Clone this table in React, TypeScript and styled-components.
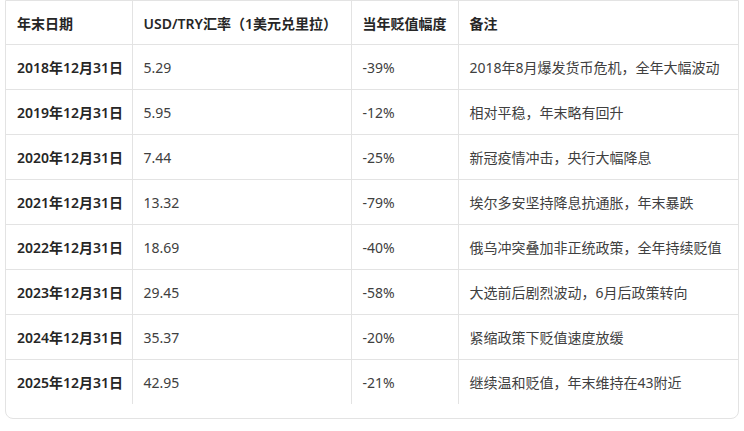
import React from "react";
import styled, { createGlobalStyle } from "styled-components";

interface IRow {
  date: string;
  rate: string;
  change: string;
  note: string;
}

const rows: IRow[] = [
  { date: "2018年12月31日", rate: "5.29", change: "-39%", note: "2018年8月爆发货币危机，全年大幅波动" },
  { date: "2019年12月31日", rate: "5.95", change: "-12%", note: "相对平稳，年末略有回升" },
  { date: "2020年12月31日", rate: "7.44", change: "-25%", note: "新冠疫情冲击，央行大幅降息" },
  { date: "2021年12月31日", rate: "13.32", change: "-79%", note: "埃尔多安坚持降息抗通胀，年末暴跌" },
  { date: "2022年12月31日", rate: "18.69", change: "-40%", note: "俄乌冲突叠加非正统政策，全年持续贬值" },
  { date: "2023年12月31日", rate: "29.45", change: "-58%", note: "大选前后剧烈波动，6月后政策转向" },
  { date: "2024年12月31日", rate: "35.37", change: "-20%", note: "紧缩政策下贬值速度放缓" },
  { date: "2025年12月31日", rate: "42.95", change: "-21%", note: "继续温和贬值，年末维持在43附近" },
];

const App = () => {
  return (
    <>
      <GlobalStyle />
      <Page>
        <TableBox>
          <StyledTable>
            <colgroup>
              <col style={{ width: 126 }} />
              <col style={{ width: 219 }} />
              <col style={{ width: 107 }} />
              <col />
            </colgroup>
            <thead>
              <tr>
                <HeadCell>年末日期</HeadCell>
                <HeadCell>USD/TRY汇率（1美元兑里拉）</HeadCell>
                <HeadCell>当年贬值幅度</HeadCell>
                <HeadCell>备注</HeadCell>
              </tr>
            </thead>
            <tbody>
              {rows.map((data) => (
                <BodyRow key={data.date}>
                  <Cell $bold>{data.date}</Cell>
                  <Cell>{data.rate}</Cell>
                  <Cell>{data.change}</Cell>
                  <Cell>{data.note}</Cell>
                </BodyRow>
              ))}
            </tbody>
          </StyledTable>
        </TableBox>
      </Page>
    </>
  );
};

export default App;

const GlobalStyle = createGlobalStyle`
  html, body {
    margin: 0;
    padding: 0;
    background: #ffffff;
  }
  body {
    font-family: "Noto Sans", "Noto Sans CJK SC", sans-serif;
  }
`;

const Page = styled.div`
  width: 744px;
  height: 431px;
  padding: 0 5px;
  box-sizing: border-box;
  overflow: hidden;
`;

const TableBox = styled.div`
  border: 1px solid #e3e3e3;
  border-radius: 0 0 8px 8px;
  padding-bottom: 14px;
`;

const StyledTable = styled.table`
  width: 100%;
  table-layout: fixed;
  border-collapse: collapse;
  font-size: 14px;
`;

const HeadCell = styled.th`
  height: 43px;
  padding: 0 11px;
  text-align: left;
  font-weight: 600;
  color: #262626;
  border-bottom: 1px solid #e3e3e3;
  border-right: 1px solid #e3e3e3;
  white-space: nowrap;
  &:last-child {
    border-right: none;
  }
`;

const BodyRow = styled.tr`
  &:last-child td {
    border-bottom: none;
  }
`;

const Cell = styled.td<{ $bold?: boolean }>`
  height: 44px;
  padding: 0 11px;
  color: ${(p) => (p.$bold ? "#262626" : "#404040")};
  font-weight: ${(p) => (p.$bold ? 600 : 400)};
  border-bottom: 1px solid #e3e3e3;
  border-right: 1px solid #e3e3e3;
  white-space: nowrap;
  &:last-child {
    border-right: none;
  }
`;
